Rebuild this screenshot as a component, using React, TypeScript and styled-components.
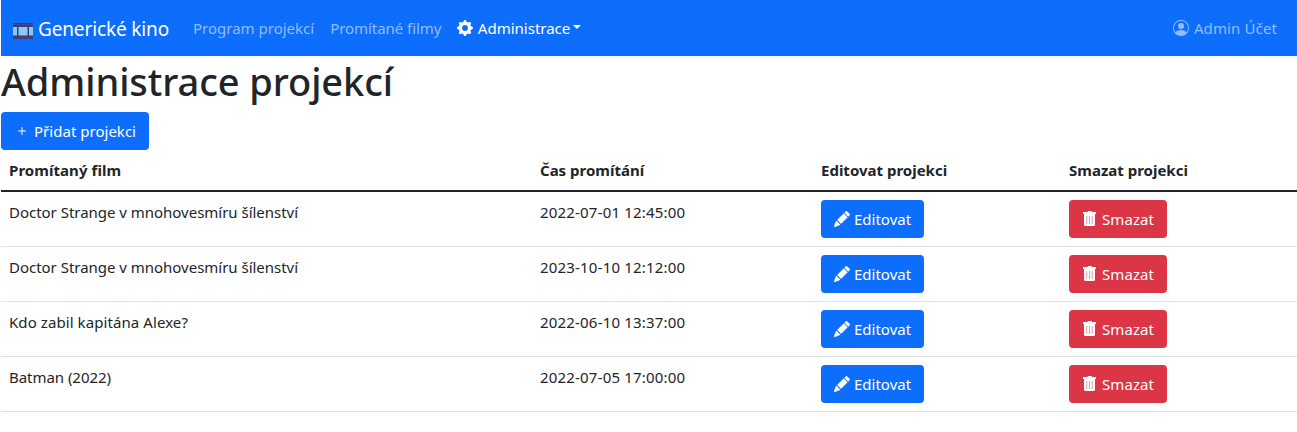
import React from 'react';
import styled, { createGlobalStyle } from 'styled-components';
import { BsGearFill, BsPencilFill, BsPersonCircle, BsPlus } from 'react-icons/bs';

const GlobalStyle = createGlobalStyle`
  *, *::before, *::after { box-sizing: border-box; }
  body {
    margin: 0;
    background: #fff;
    color: #212529;
    font-family: "Noto Sans", "Open Sans", sans-serif;
    font-size: 15px;
    line-height: 24px;
  }
`;

const Page = styled.div`
  padding-left: 1px;
`;

const Navbar = styled.nav`
  display: flex;
  align-items: center;
  height: 56px;
  padding: 0 12px;
  background: #0d6efd;
`;

const Brand = styled.a`
  display: flex;
  align-items: center;
  width: 172px;
  color: #fff;
  font-size: 19px;
  line-height: 30px;
  letter-spacing: -0.14px;
  white-space: nowrap;
  text-decoration: none;

  svg {
    flex: none;
    margin: 6px 4px 0 0;
  }
`;

const BrandName = styled.span`
  padding-top: 2px;
`;

const NavLinks = styled.div`
  display: flex;
  flex: 1;
`;

const NavLink = styled.a<{ $active?: boolean; $spacing?: number }>`
  display: flex;
  align-items: center;
  padding: 8px;
  color: ${({ $active }) => ($active ? '#fff' : 'rgba(255, 255, 255, 0.55)')};
  letter-spacing: ${({ $spacing = 0 }) => $spacing}px;
  white-space: nowrap;
  text-decoration: none;

  svg {
    margin-right: 4.5px;
  }
`;

const Caret = styled.span`
  margin: -2px 0 0 3px;
  border-top: 4.8px solid;
  border-right: 4.8px solid transparent;
  border-left: 4.8px solid transparent;
`;

const Title = styled.h1`
  margin: 0;
  padding: 1px 0 7px;
  font-size: 38px;
  font-weight: 500;
  line-height: 48px;
  letter-spacing: -0.07px;
`;

const Button = styled.button<{ $variant?: 'primary' | 'danger'; $spacing?: number }>`
  display: inline-flex;
  align-items: center;
  height: 38px;
  padding: 0 12px;
  border: 1px solid transparent;
  border-radius: 4px;
  background: ${({ $variant }) => ($variant === 'danger' ? '#dc3545' : '#0d6efd')};
  background-clip: border-box;
  background-origin: border-box;
  color: #fff;
  font: inherit;
  letter-spacing: ${({ $spacing = 0.02 }) => $spacing}px;
  white-space: nowrap;
  vertical-align: top;

  svg {
    margin-right: 4px;
  }
`;

const PencilIcon = styled(BsPencilFill)`
  stroke: currentColor;
  stroke-width: 0.3px;
`;

const Table = styled.table`
  width: 100%;
  table-layout: fixed;
  border-collapse: separate;
  border-spacing: 0;
`;

const HeadCell = styled.th<{ $width?: number; $spacing?: number }>`
  width: ${({ $width }) => ($width ? `${$width}px` : 'auto')};
  padding: 8px;
  border-bottom: 2px solid #212529;
  text-align: left;
  font-weight: 700;
  letter-spacing: ${({ $spacing = 0 }) => $spacing}px;
`;

const Cell = styled.td<{ $spacing?: number }>`
  padding: 8px;
  height: 55px;
  border-bottom: 1px solid #dee2e6;
  letter-spacing: ${({ $spacing = 0 }) => $spacing}px;
  vertical-align: top;
`;

const FilmIcon = () => (
  <svg width="21" height="16" viewBox="0 0 21 16">
    <rect width="20" height="16" fill="#433b6b" />
    <rect y="4" width="4" height="8.5" fill="#83cbff" />
    <rect x="5.5" y="4" width="9" height="8.5" fill="#83cbff" />
    <rect x="16" y="4" width="4" height="8.5" fill="#83cbff" />
    {[0.5, 3.5, 6.5, 9.5, 12.5, 15.5, 18.5].map((x) => (
      <g key={x} fill="#2a6be0" opacity="0.7">
        <rect x={x} y="1" width="1.2" height="1.2" />
        <rect x={x} y="14" width="1.2" height="1.2" />
      </g>
    ))}
  </svg>
);

const TrashIcon = () => (
  <svg width="16" height="16" viewBox="0 0 16 16" fill="currentColor">
    <path d="M2 1h3.500a1 1 0 0 1 1-1h2.500a1 1 0 0 1 1 1h3.500a.5 .5 0 0 1 .5.500V3H1V1.500A.5 .5 0 0 1 1.500 1z" />
    <path d="M2 3h11v10.500a1.500 1.500 0 0 1-1.500 1.500H3.500a1.500 1.500 0 0 1-1.500-1.500z" />
    <path d="M4.750 5v8M7.500 5v8M10.250 5v8" stroke="#dc3545" strokeOpacity="0.5" fill="none" />
  </svg>
);

const screenings = [
  { film: 'Doctor Strange v mnohovesmíru šílenství', time: '2022-07-01 12:45:00', spacing: -0.02 },
  { film: 'Doctor Strange v mnohovesmíru šílenství', time: '2023-10-10 12:12:00', spacing: -0.02 },
  { film: 'Kdo zabil kapitána Alexe?', time: '2022-06-10 13:37:00', spacing: 0.08 },
  { film: 'Batman (2022)', time: '2022-07-05 17:00:00', spacing: -0.04 },
];

export default function App() {
  return (
    <>
      <GlobalStyle />
      <Page>
        <Navbar>
          <Brand>
            <FilmIcon />
            <BrandName>Generické kino</BrandName>
          </Brand>
          <NavLinks>
            <NavLink>Program projekcí</NavLink>
            <NavLink $spacing={-0.05}>Promítané filmy</NavLink>
            <NavLink $active>
              <BsGearFill size={16} />
              Administrace
              <Caret />
            </NavLink>
          </NavLinks>
          <NavLink $spacing={0.12}>
            <BsPersonCircle size={16} />
            Admin Účet
          </NavLink>
        </Navbar>
        <Title>Administrace projekcí</Title>
        <Button>
          <BsPlus size={16} />
          Přidat projekci
        </Button>
        <Table>
          <thead>
            <tr>
              <HeadCell $width={531} $spacing={0.06}>Promítaný film</HeadCell>
              <HeadCell $width={281}>Čas promítání</HeadCell>
              <HeadCell $width={248}>Editovat projekci</HeadCell>
              <HeadCell>Smazat projekci</HeadCell>
            </tr>
          </thead>
          <tbody>
            {screenings.map(({ film, time, spacing }) => (
              <tr key={time}>
                <Cell $spacing={spacing}>{film}</Cell>
                <Cell $spacing={0.19}>{time}</Cell>
                <Cell>
                  <Button $spacing={0}>
                    <PencilIcon size={16} />
                    Editovat
                  </Button>
                </Cell>
                <Cell>
                  <Button $variant="danger" $spacing={0.07}>
                    <TrashIcon />
                    Smazat
                  </Button>
                </Cell>
              </tr>
            ))}
          </tbody>
        </Table>
      </Page>
    </>
  );
}
